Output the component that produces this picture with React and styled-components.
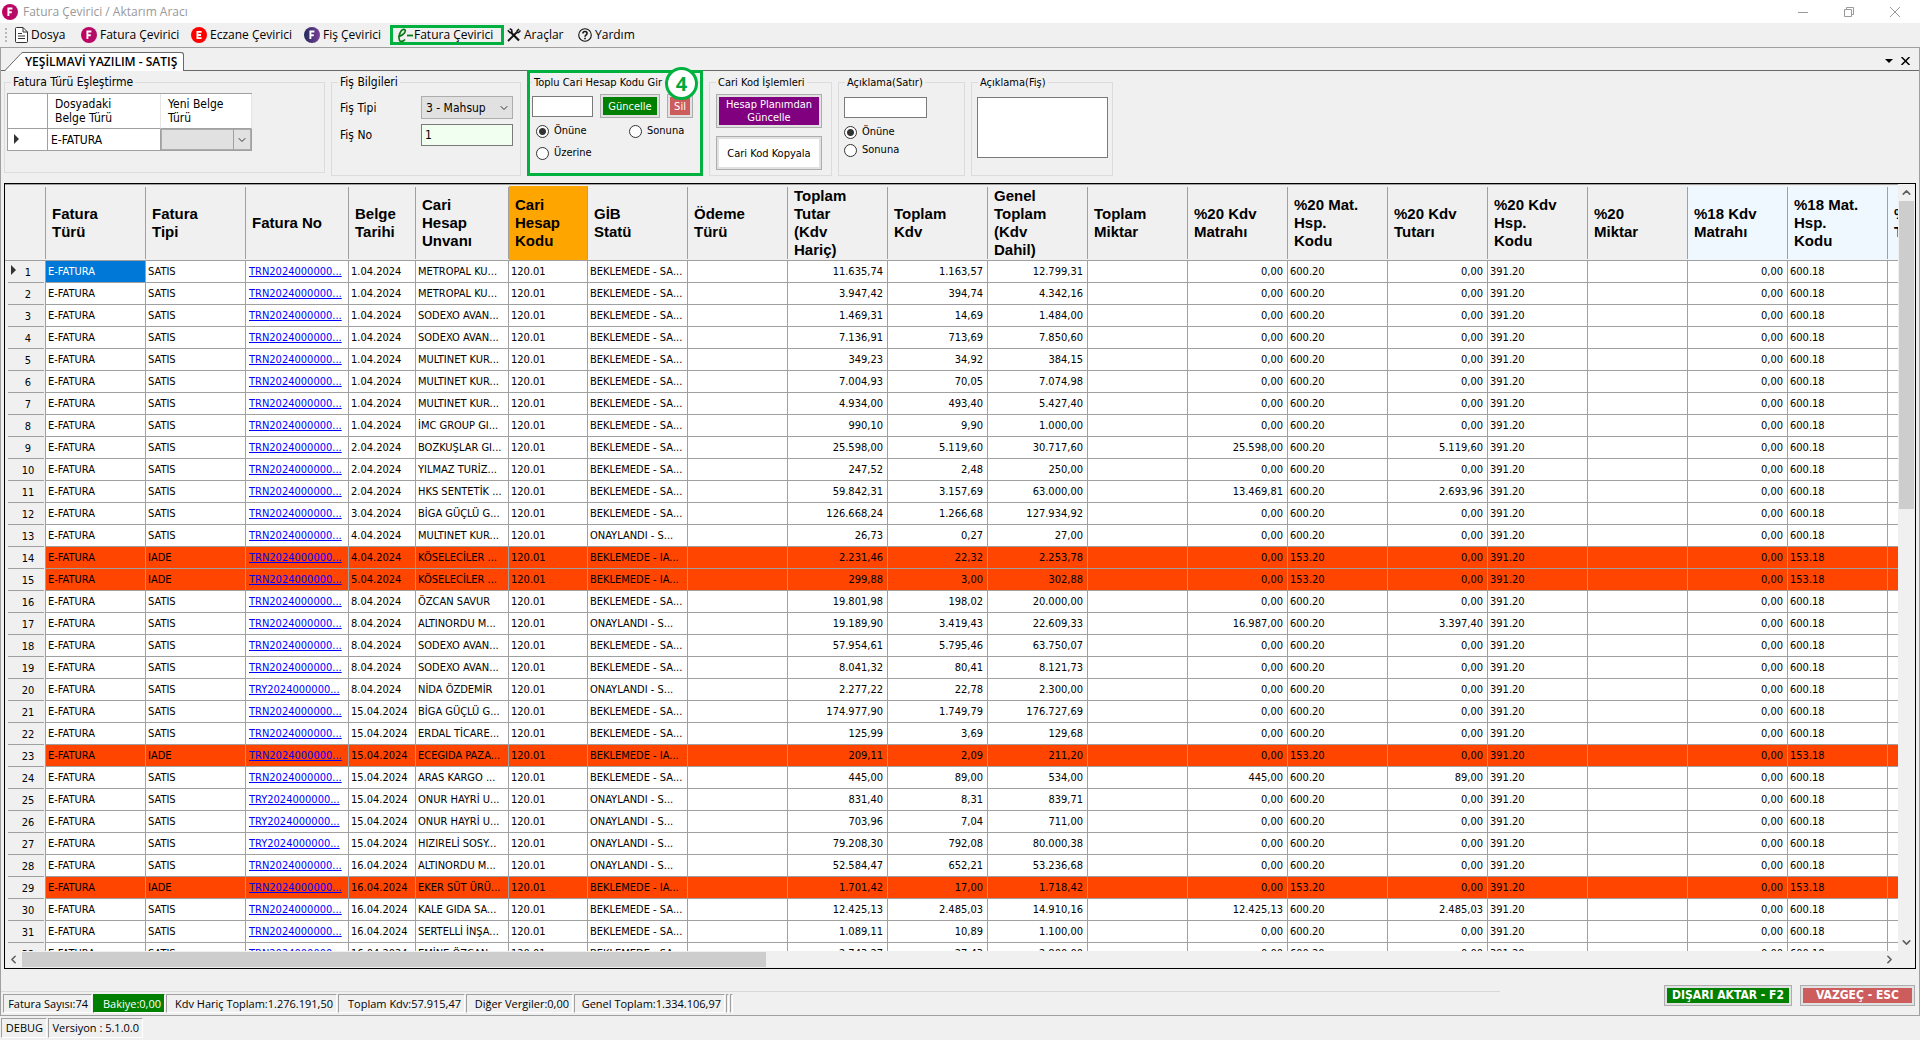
import React, { useState } from "react";
import styled, { createGlobalStyle, css } from "styled-components";
import { ChevronDown, ChevronLeft, ChevronRight, ChevronUp } from "lucide-react";

const columns = [
  { title: "Fatura\nTürü", width: 100 },
  { title: "Fatura\nTipi", width: 100 },
  { title: "Fatura No", width: 103 },
  { title: "Belge\nTarihi", width: 67 },
  { title: "Cari\nHesap\nUnvanı", width: 93 },
  { title: "Cari\nHesap\nKodu", width: 79, color: "#ffa500" },
  { title: "GİB\nStatü", width: 100 },
  { title: "Ödeme\nTürü", width: 100 },
  { title: "Toplam\nTutar\n(Kdv\nHariç)", width: 100 },
  { title: "Toplam\nKdv", width: 100 },
  { title: "Genel\nToplam\n(Kdv\nDahil)", width: 100 },
  { title: "Toplam\nMiktar", width: 100 },
  { title: "%20 Kdv\nMatrahı", width: 100 },
  { title: "%20 Mat.\nHsp.\nKodu", width: 100 },
  { title: "%20 Kdv\nTutarı", width: 100 },
  { title: "%20 Kdv\nHsp.\nKodu", width: 100 },
  { title: "%20\nMiktar", width: 100 },
  { title: "%18 Kdv\nMatrahı", width: 100, color: "#f0f8ff" },
  { title: "%18 Mat.\nHsp.\nKodu", width: 100, color: "#f0f8ff" },
  { title: "%18 Kdv\nTutarı", width: 100, color: "#f0f8ff" },
];

const SA = "BEKLEMEDE - SA...";
const IA = "BEKLEMEDE - IA...";
const ON = "ONAYLANDI - S...";

// prefix, date, customer, status, total, vat, grand total, 20% base, 20% vat
const invoices = [
  ["TRN", "1.04.2024", "METROPAL KU...", SA, "11.635,74", "1.163,57", "12.799,31"],
  ["TRN", "1.04.2024", "METROPAL KU...", SA, "3.947,42", "394,74", "4.342,16"],
  ["TRN", "1.04.2024", "SODEXO AVAN...", SA, "1.469,31", "14,69", "1.484,00"],
  ["TRN", "1.04.2024", "SODEXO AVAN...", SA, "7.136,91", "713,69", "7.850,60"],
  ["TRN", "1.04.2024", "MULTINET KUR...", SA, "349,23", "34,92", "384,15"],
  ["TRN", "1.04.2024", "MULTINET KUR...", SA, "7.004,93", "70,05", "7.074,98"],
  ["TRN", "1.04.2024", "MULTINET KUR...", SA, "4.934,00", "493,40", "5.427,40"],
  ["TRN", "1.04.2024", "İMC GROUP GI...", SA, "990,10", "9,90", "1.000,00"],
  ["TRN", "2.04.2024", "BOZKUŞLAR GI...", SA, "25.598,00", "5.119,60", "30.717,60", "25.598,00", "5.119,60"],
  ["TRN", "2.04.2024", "YILMAZ TURİZ...", SA, "247,52", "2,48", "250,00"],
  ["TRN", "2.04.2024", "HKS SENTETİK ...", SA, "59.842,31", "3.157,69", "63.000,00", "13.469,81", "2.693,96"],
  ["TRN", "3.04.2024", "BİGA GÜÇLÜ G...", SA, "126.668,24", "1.266,68", "127.934,92"],
  ["TRN", "4.04.2024", "MULTINET KUR...", ON, "26,73", "0,27", "27,00"],
  ["TRN", "4.04.2024", "KÖSELECİLER ...", IA, "2.231,46", "22,32", "2.253,78"],
  ["TRN", "5.04.2024", "KÖSELECİLER ...", IA, "299,88", "3,00", "302,88"],
  ["TRN", "8.04.2024", "ÖZCAN SAVUR", SA, "19.801,98", "198,02", "20.000,00"],
  ["TRN", "8.04.2024", "ALTINORDU M...", ON, "19.189,90", "3.419,43", "22.609,33", "16.987,00", "3.397,40"],
  ["TRN", "8.04.2024", "SODEXO AVAN...", SA, "57.954,61", "5.795,46", "63.750,07"],
  ["TRN", "8.04.2024", "SODEXO AVAN...", SA, "8.041,32", "80,41", "8.121,73"],
  ["TRY", "8.04.2024", "NİDA ÖZDEMİR", ON, "2.277,22", "22,78", "2.300,00"],
  ["TRN", "15.04.2024", "BİGA GÜÇLÜ G...", SA, "174.977,90", "1.749,79", "176.727,69"],
  ["TRN", "15.04.2024", "ERDAL TİCARE...", SA, "125,99", "3,69", "129,68"],
  ["TRN", "15.04.2024", "ECEGIDA PAZA...", IA, "209,11", "2,09", "211,20"],
  ["TRN", "15.04.2024", "ARAS KARGO ...", SA, "445,00", "89,00", "534,00", "445,00", "89,00"],
  ["TRY", "15.04.2024", "ONUR HAYRİ U...", ON, "831,40", "8,31", "839,71"],
  ["TRY", "15.04.2024", "ONUR HAYRİ U...", ON, "703,96", "7,04", "711,00"],
  ["TRY", "15.04.2024", "HIZIRELİ SOSY...", ON, "79.208,30", "792,08", "80.000,38"],
  ["TRN", "16.04.2024", "ALTINORDU M...", ON, "52.584,47", "652,21", "53.236,68"],
  ["TRN", "16.04.2024", "EKER SÜT ÜRÜ...", IA, "1.701,42", "17,00", "1.718,42"],
  ["TRN", "16.04.2024", "KALE GIDA SA...", SA, "12.425,13", "2.485,03", "14.910,16", "12.425,13", "2.485,03"],
  ["TRN", "16.04.2024", "SERTELLİ İNŞA...", SA, "1.089,11", "10,89", "1.100,00"],
  ["TRN", "16.04.2024", "EMİNE ÖZCAN ...", SA, "2.743,27", "27,43", "2.800,00"],
];

const totals = [
  { text: "Fatura Sayısı:74", width: 89 },
  { text: "Bakiye:0,00", width: 72, green: true },
  { text: "Kdv Hariç Toplam:1.276.191,50", width: 171 },
  { text: "Toplam Kdv:57.915,47", width: 127 },
  { text: "Diğer Vergiler:0,00", width: 107 },
  { text: "Genel Toplam:1.334.106,97", width: 151 },
];

const RoundLogo = ({ letter, from, to, size = 16 }) => (
  <svg width={size} height={size} viewBox="0 0 16 16" aria-hidden="true">
    <defs>
      <linearGradient id={`g${letter}${size}${from.slice(1)}`} x1="0" x2="1">
        <stop offset="0" stopColor={from} />
        <stop offset="1" stopColor={to} />
      </linearGradient>
    </defs>
    <circle cx="8" cy="8" r="8" fill={`url(#g${letter}${size}${from.slice(1)})`} />
    {letter === "F" ? (
      <path d="M6.4 12V4.5H10.4M6.4 8.2H9.8" stroke="#fff" strokeWidth="1.9" fill="none" />
    ) : (
      <path d="M10.6 4.8H6.4V11.2H10.6M6.4 8H10" stroke="#fff" strokeWidth="1.8" fill="none" />
    )}
  </svg>
);

const FileIcon = () => (
  <svg width="13" height="16" viewBox="0 0 13 16" fill="none" stroke="#333" aria-hidden="true">
    <path d="M.5 1.5Q.5.5 1.5.5H8L12.5 5V14.5Q12.5 15.5 11.5 15.5H1.5Q.5 15.5.5 14.5Z" fill="#fff" />
    <path d="M8 .5V5H12.5M3 6.5H7M3 9H10M3 11.5H10" />
  </svg>
);

const EIcon = () => (
  <svg width="17" height="15" viewBox="0 0 17 15" fill="none" stroke="#0a7a14" aria-hidden="true">
    <path
      d="M1 8.5C4 8 8.5 5.5 8.3 2.8C8.2.8 5.8.8 4.3 2.8C2.3 5.5 1.3 10 2.5 12.3C3.6 14.4 6.3 13.4 8 11.5"
      strokeWidth="1.7"
    />
    <path d="M10 7.5H16" strokeWidth="1.8" />
  </svg>
);

const ToolsIcon = () => (
  <svg width="14" height="14" viewBox="0 0 14 14" fill="none" stroke="#111" aria-hidden="true">
    <path d="M4 4.5L12 12.5" strokeWidth="2.2" />
    <path d="M.8 2.2L3 4.6 5 4 4.7 2 2.7.6" strokeWidth="1.5" />
    <path d="M1 13L9.500 4.500" strokeWidth="1.8" />
    <path d="M12 1L10 3V4.500H11.500L13.500 2.500" strokeWidth="1.5" />
  </svg>
);

const HelpIcon = () => (
  <svg width="14" height="14" viewBox="0 0 14 14" fill="none" stroke="#111" aria-hidden="true">
    <circle cx="7" cy="7" r="6.3" strokeWidth="1.1" />
    <path d="M4.9 5.5C4.9 2.9 9.1 2.9 9.1 5.5C9.1 7 7 6.9 7 8.8" strokeWidth="1.5" />
    <path d="M7 9.8V11.3" strokeWidth="1.6" />
  </svg>
);

const RowArrow = () => (
  <svg width="5" height="10" viewBox="0 0 5 10" aria-hidden="true">
    <path d="M0 0L5 5L0 10Z" fill="#333" />
  </svg>
);

const menu = [
  { text: "Dosya", width: 66, icon: <FileIcon /> },
  { text: "Fatura Çevirici", width: 110, icon: <RoundLogo letter="F" from="#c2005f" to="#b0106a" /> },
  { text: "Eczane Çevirici", width: 113, icon: <RoundLogo letter="E" from="#ff0000" to="#ff0000" /> },
  { text: "Fiş Çevirici", width: 86, icon: <RoundLogo letter="F" from="#232a5c" to="#7b3f98" /> },
  { text: "Fatura Çevirici", width: 114, icon: <EIcon />, marked: true },
  { text: "Araçlar", width: 71, icon: <ToolsIcon /> },
  { text: "Yardım", width: 70, icon: <HelpIcon /> },
];

function InvoiceRow({ invoice, index }) {
  const [prefix, date, customer, status, total, vat, grand, base = "0,00", baseVat = "0,00"] = invoice;
  const refund = status === IA;
  const account = refund ? "153" : "600";

  return (
    <Row $refund={refund}>
      <RowHeader scope="row">
        {index === 0 && (
          <Current>
            <RowArrow />
          </Current>
        )}
        {index + 1}
      </RowHeader>
      <Cell $selected={index === 0}>E-FATURA</Cell>
      <Cell>{refund ? "IADE" : "SATIS"}</Cell>
      <Cell>
        <InvoiceLink href="#fatura">{prefix}2024000000...</InvoiceLink>
      </Cell>
      <Cell>{date}</Cell>
      <Cell>{customer}</Cell>
      <Cell>120.01</Cell>
      <Cell>{status}</Cell>
      <Cell />
      <Cell $right>{total}</Cell>
      <Cell $right>{vat}</Cell>
      <Cell $right>{grand}</Cell>
      <Cell />
      <Cell $right>{base}</Cell>
      <Cell>{account}.20</Cell>
      <Cell $right>{baseVat}</Cell>
      <Cell>391.20</Cell>
      <Cell />
      <Cell $right>0,00</Cell>
      <Cell>{account}.18</Cell>
      <Cell />
    </Row>
  );
}

export default function App() {
  const [place, setPlace] = useState("once");
  const [notePlace, setNotePlace] = useState("once");

  return (
    <>
      <GlobalStyle />
      <Window>
        <TitleBar>
          <RoundLogo letter="F" from="#c2005f" to="#b0106a" />
          <Title>Fatura Çevirici / Aktarım Aracı</Title>
          <WindowButton aria-label="Küçült">
            <svg width="10" height="10" viewBox="0 0 10 10" stroke="#999" fill="none">
              <path d="M0 5.5H10" />
            </svg>
          </WindowButton>
          <WindowButton aria-label="Önceki boyut">
            <svg width="10" height="10" viewBox="0 0 10 10" stroke="#999" fill="none">
              <path d="M.5 2.5H7.5V9.5H.5ZM2.5 2.5V.5H9.5V7.5H7.5" />
            </svg>
          </WindowButton>
          <WindowButton aria-label="Kapat">
            <svg width="10" height="10" viewBox="0 0 10 10" stroke="#999" fill="none">
              <path d="M0 0L10 10M10 0L0 10" />
            </svg>
          </WindowButton>
        </TitleBar>

        <MenuBar>
          <Grip />
          {menu.map((m, i) => (
            <MenuItem key={i} $width={m.width} $marked={m.marked}>
              {m.icon}
              {m.text}
            </MenuItem>
          ))}
        </MenuBar>

        <Document>
          <TabStrip>
            <Slope width="18" height="19" viewBox="0 0 18 19" aria-hidden="true">
              <path d="M0 19L16 1.5Q17 .5 18 .5V19Z" fill="#fff" />
              <path d="M0 18.5L16 1.5Q17 .5 18 .5" fill="none" stroke="#696969" />
            </Slope>
            <Tab>YEŞİLMAVİ YAZILIM - SATIŞ</Tab>
            <TabTools>
              <TabButton aria-label="Sekmeler">
                <svg width="8" height="4" viewBox="0 0 8 4">
                  <path d="M0 0H8L4 4Z" />
                </svg>
              </TabButton>
              <TabButton aria-label="Sekmeyi kapat">
                <svg width="9" height="8" viewBox="0 0 9 8" stroke="#000" strokeWidth="1.5">
                  <path d="M.5 0L8.5 8M8.5 0L.5 8" />
                </svg>
              </TabButton>
            </TabTools>
          </TabStrip>

          <Options>
            <Group $width={321} $height={98} $large>
              <legend>Fatura Türü Eşleştirme</legend>
              <MatchTable>
                <colgroup>
                  <col width="40" />
                  <col width="113" />
                  <col width="91" />
                </colgroup>
                <thead>
                  <tr>
                    <th />
                    <th>{"Dosyadaki\nBelge Türü"}</th>
                    <th>{"Yeni Belge\nTürü"}</th>
                  </tr>
                </thead>
                <tbody>
                  <tr>
                    <MatchArrow>
                      <RowArrow />
                    </MatchArrow>
                    <td>E-FATURA</td>
                    <MatchSelect>
                      <SelectBox $height={21}>
                        <select aria-label="Yeni Belge Türü">
                          <option></option>
                        </select>
                        <Divider />
                        <ChevronDown size={12} strokeWidth={2} />
                      </SelectBox>
                    </MatchSelect>
                  </tr>
                </tbody>
              </MatchTable>
            </Group>

            <Group $width={190} $height={101} $large>
              <legend>Fiş Bilgileri</legend>
              <Fields>
                <label htmlFor="fisTipi">Fiş Tipi</label>
                <SelectBox $height={23}>
                  <select id="fisTipi">
                    <option>3 - Mahsup</option>
                  </select>
                  <ChevronDown size={12} strokeWidth={2} />
                </SelectBox>
                <label htmlFor="fisNo">Fiş No</label>
                <TextInput id="fisNo" defaultValue="1" $mint $height={22} />
              </Fields>
            </Group>

            <Step>
              <StepBadge>4</StepBadge>
              <Group $height={96} $open>
                <legend>Toplu Cari Hesap Kodu Gir</legend>
                <CodeRow>
                  <TextInput aria-label="Cari hesap kodu" $width={61} $height={21} />
                  <Button $color="#008000" $width={60} $height={24}>
                    Güncelle
                  </Button>
                  <Button $color="#cd5c5c" $width={26} $height={24}>
                    Sil
                  </Button>
                </CodeRow>
                <Choices>
                  <Radio>
                    <input type="radio" name="place" checked={place === "once"} onChange={() => setPlace("once")} />
                    Önüne
                  </Radio>
                  <Radio>
                    <input type="radio" name="place" checked={place === "sona"} onChange={() => setPlace("sona")} />
                    Sonuna
                  </Radio>
                  <Radio>
                    <input type="radio" name="place" checked={place === "uzerine"} onChange={() => setPlace("uzerine")} />
                    Üzerine
                  </Radio>
                </Choices>
              </Group>
            </Step>

            <Group $width={123} $height={101}>
              <legend>Cari Kod İşlemleri</legend>
              <CodeActions>
                <Button $color="#800080" $height={34}>
                  Hesap Planımdan Güncelle
                </Button>
                <Button $height={34}>Cari Kod Kopyala</Button>
              </CodeActions>
            </Group>

            <Group $width={127} $height={101}>
              <legend>Açıklama(Satır)</legend>
              <Notes>
                <TextInput aria-label="Açıklama(Satır)" $width={83} $height={21} />
                <RadioColumn>
                  <Radio>
                    <input type="radio" name="note" checked={notePlace === "once"} onChange={() => setNotePlace("once")} />
                    Önüne
                  </Radio>
                  <Radio>
                    <input type="radio" name="note" checked={notePlace === "sona"} onChange={() => setNotePlace("sona")} />
                    Sonuna
                  </Radio>
                </RadioColumn>
              </Notes>
            </Group>

            <Group $width={142} $height={101}>
              <legend>Açıklama(Fiş)</legend>
              <Notes>
                <TextArea aria-label="Açıklama(Fiş)" />
              </Notes>
            </Group>
          </Options>

          <DataGrid>
            <Viewport>
              <Table>
                <colgroup>
                  <col style={{ width: 41 }} />
                  {columns.map((c, i) => (
                    <col key={i} style={{ width: c.width }} />
                  ))}
                </colgroup>
                <thead>
                  <tr>
                    <ColumnHeader />
                    {columns.map((c, i) => (
                      <ColumnHeader key={i} scope="col" $color={c.color}>
                        {c.title}
                      </ColumnHeader>
                    ))}
                  </tr>
                </thead>
                <tbody>
                  {invoices.map((invoice, i) => (
                    <InvoiceRow key={i} invoice={invoice} index={i} />
                  ))}
                </tbody>
              </Table>
            </Viewport>
            <ScrollColumn>
              <ChevronUp size={13} strokeWidth={3} />
              <ScrollTrack>
                <ThumbY />
              </ScrollTrack>
              <ChevronDown size={13} strokeWidth={3} />
            </ScrollColumn>
            <ScrollRow>
              <ChevronLeft size={13} strokeWidth={3} />
              <ScrollTrack>
                <ThumbX />
              </ScrollTrack>
              <ChevronRight size={13} strokeWidth={3} />
            </ScrollRow>
          </DataGrid>

          <Footer>
            <Totals>
              {totals.map((t) => (
                <Pane key={t.text} $width={t.width} $green={t.green}>
                  {t.text}
                </Pane>
              ))}
              <Pane $width={3} />
              <Pane $width={3} />
            </Totals>
            <Actions>
              <Button $color="#008000" $width={128} $height={21} $bold>
                DIŞARI AKTAR - F2
              </Button>
              <Button $color="#cd5c5c" $width={115} $height={21} $bold>
                VAZGEÇ - ESC
              </Button>
            </Actions>
          </Footer>
        </Document>

        <StatusBar>
          <Pane $width={46}>DEBUG</Pane>
          <Pane $width={95}>Versiyon : 5.1.0.0</Pane>
        </StatusBar>
      </Window>
    </>
  );
}

const uiFont = `"Open Sans", "Noto Sans", sans-serif`;
const formFont = `"DejaVu Sans Condensed", "DejaVu Sans", sans-serif`;

const GlobalStyle = createGlobalStyle`
  * {
    box-sizing: border-box;
  }
  body {
    margin: 0;
    background: #f0f0f0;
    color: #000;
    font-family: ${formFont};
    font-size: 11px;
  }
  button, input, select, textarea {
    font: inherit;
    color: inherit;
    margin: 0;
  }
`;

const Window = styled.div`
  display: flex;
  flex-direction: column;
  height: 100vh;
  overflow: hidden;
`;

const TitleBar = styled.header`
  display: flex;
  align-items: center;
  height: 23px;
  padding: 0 2px;
  background: #fff;
`;

const Title = styled.div`
  flex: 1;
  padding-left: 5px;
  color: #999;
  font-family: ${uiFont};
  font-size: 12px;
`;

const WindowButton = styled.button`
  display: flex;
  align-items: center;
  justify-content: center;
  width: 46px;
  height: 20px;
  padding: 0;
  border: 0;
  background: none;
`;

const MenuBar = styled.nav`
  display: flex;
  align-items: center;
  height: 24px;
`;

const Grip = styled.div`
  width: 2px;
  height: 14px;
  margin: 0 8px 0 5px;
  background: repeating-linear-gradient(#b8b8b8 0 2px, transparent 2px 4px);
`;

const MenuItem = styled.button`
  display: flex;
  align-items: center;
  gap: 3px;
  width: ${(p) => p.$width}px;
  height: 20px;
  padding: 0;
  border: 0;
  background: none;
  font-family: ${uiFont};
  font-size: 12px;
  line-height: 14px;
  white-space: nowrap;
  ${(p) =>
    p.$marked &&
    css`
      gap: 0;
      margin-right: 3px;
      padding-left: 4px;
      border: 3px solid #00b140;
    `}
`;

const Document = styled.main`
  display: flex;
  flex: 1;
  flex-direction: column;
  min-height: 0;
  border: 1px solid #a0a0a0;
`;

const TabStrip = styled.div`
  display: flex;
  align-items: flex-end;
  height: 23px;
  padding-left: 4px;
  border-bottom: 1px solid #696969;
`;

const Slope = styled.svg`
  margin-bottom: -1px;
`;

const Tab = styled.button`
  height: 19px;
  margin-bottom: -1px;
  padding: 0 6px 2px 2px;
  border: 1px solid #696969;
  border-width: 1px 1px 0 0;
  border-top-right-radius: 3px;
  background: #fff;
  font-family: ${uiFont};
  font-size: 12px;
  font-weight: 600;
  line-height: 15px;
`;

const TabTools = styled.div`
  display: flex;
  align-items: center;
  gap: 8px;
  margin-left: auto;
  padding: 0 9px 5px 0;
`;

const TabButton = styled.button`
  display: flex;
  padding: 0;
  border: 0;
  background: none;
`;

const Options = styled.div`
  display: flex;
  align-items: flex-start;
  gap: 6px;
  padding: 4px 3px 7px;
`;

const Group = styled.fieldset`
  flex: none;
  min-width: 0;
  width: ${(p) => (p.$width ? `${p.$width}px` : "auto")};
  height: ${(p) => p.$height}px;
  margin: 0;
  padding: 0;
  border: 1px solid #dcdcdc;
  font-size: ${(p) => (p.$large ? 12 : 11)}px;

  legend {
    margin-left: ${(p) => (p.$open ? 2 : 6)}px;
    padding: 0 2px;
    line-height: 15px;
  }
  ${(p) =>
    p.$open &&
    css`
      border-width: 1px 0 0;
    `}
`;

const MatchTable = styled.table`
  width: 245px;
  margin: 3px 0 0 2px;
  table-layout: fixed;
  border-spacing: 0;
  border-top: 1px solid #a0a0a0;
  border-left: 1px solid #a0a0a0;
  background: #fff;

  th {
    height: 35px;
    padding: 0 0 0 7px;
    border-right: 1px solid #e4e4e4;
    border-bottom: 1px solid #a0a0a0;
    font-weight: normal;
    line-height: 14px;
    text-align: left;
    white-space: pre-line;
  }
  th:first-child {
    border-right-color: #a0a0a0;
  }
  td {
    height: 22px;
    padding: 0 0 0 3px;
    border: 1px solid #a0a0a0;
    border-width: 0 1px 1px 0;
  }
`;

const MatchArrow = styled.td`
  && {
    padding-left: 6px;
  }
`;

const MatchSelect = styled.td`
  && {
    padding: 0;
  }
`;

const SelectBox = styled.div`
  position: relative;
  height: ${(p) => p.$height}px;

  select {
    width: 100%;
    height: 100%;
    padding: 0 4px;
    border: 1px solid #adadad;
    border-radius: 0;
    appearance: none;
    background: #e1e1e1;
  }
  svg {
    position: absolute;
    top: 50%;
    right: 3px;
    margin-top: -6px;
    color: #333;
    pointer-events: none;
  }
`;

const Divider = styled.span`
  position: absolute;
  top: 0;
  right: 17px;
  width: 1px;
  height: 100%;
  background: #a0a0a0;
`;

const Fields = styled.div`
  display: grid;
  grid-template-columns: 81px 92px;
  align-items: center;
  row-gap: 5px;
  padding: 6px 0 0 8px;
`;

const TextInput = styled.input`
  display: block;
  width: ${(p) => (p.$width ? `${p.$width}px` : "100%")};
  height: ${(p) => p.$height}px;
  padding: 0 3px;
  border: 1px solid #7a7a7a;
  background: ${(p) => (p.$mint ? "#f0fff0" : "#fff")};
`;

const TextArea = styled.textarea`
  display: block;
  width: 131px;
  height: 61px;
  border: 1px solid #7a7a7a;
  resize: none;
`;

const Step = styled.div`
  position: relative;
  flex: none;
  width: 176px;
  height: 106px;
  margin-top: -5px;
  padding-top: 2px;
  border: 3px solid #00b140;
`;

const StepBadge = styled.div`
  position: absolute;
  top: -6px;
  right: 2px;
  width: 33px;
  height: 33px;
  border: 3px solid #00b140;
  border-radius: 50%;
  background: #fff;
  color: #00a83c;
  font-family: ${uiFont};
  font-size: 20px;
  font-weight: 700;
  line-height: 27px;
  text-align: center;
`;

const CodeRow = styled.div`
  display: flex;
  align-items: center;
  gap: 7px;
  padding: 4px 0 0 2px;
`;

const Choices = styled.div`
  display: grid;
  grid-template-columns: 93px auto;
  row-gap: 8px;
  padding: 6px 0 0 6px;
`;

const Radio = styled.label`
  display: flex;
  align-items: center;
  gap: 5px;
  line-height: 14px;

  input {
    width: 13px;
    height: 13px;
    border: 1px solid #333;
    border-radius: 50%;
    appearance: none;
    background: #fff;
  }
  input:checked {
    background: radial-gradient(#333 0 3px, #fff 4px);
  }
`;

const RadioColumn = styled.div`
  display: grid;
  gap: 4px;
  padding-top: 7px;
`;

const CodeActions = styled.div`
  display: grid;
  gap: 8px;
  padding: 4px 9px 0 6px;
`;

const Notes = styled.div`
  padding: 7px 0 0 5px;
`;

const Button = styled.button`
  width: ${(p) => (p.$width ? `${p.$width}px` : "auto")};
  height: ${(p) => p.$height}px;
  padding: 0 2px;
  border: 1px solid #adadad;
  background: ${(p) => p.$color || "#fff"};
  box-shadow: inset 0 0 0 2px #e1e1e1;
  color: ${(p) => (p.$color ? "#fff" : "#000")};
  line-height: 13px;
  ${(p) =>
    p.$bold &&
    css`
      font-size: 12px;
      font-weight: 700;
      white-space: nowrap;
    `}
`;

const DataGrid = styled.section`
  display: grid;
  flex: 1;
  grid-template-columns: minmax(0, 1fr) 17px;
  grid-template-rows: minmax(0, 1fr) 17px;
  min-height: 0;
  margin: 0 3px;
  border: 1px solid #000;
`;

const Viewport = styled.div`
  overflow: hidden;
  border-top: 1px solid #a0a0a0;
  background: #fff;
`;

const Table = styled.table`
  width: 1955px;
  table-layout: fixed;
  border-spacing: 0;
`;

const ColumnHeader = styled.th`
  height: 76px;
  padding: 0 0 0 6px;
  border-bottom: 1px solid #a0a0a0;
  background: linear-gradient(#a0a0a0, #a0a0a0) right 2px / 1px 72px no-repeat ${(p) => p.$color || "#f0f0f0"};
  box-shadow: inset 0 1px #f0f0f0;
  font-family: "Liberation Sans", Arial, sans-serif;
  font-size: 15px;
  font-weight: 700;
  line-height: 18px;
  text-align: left;
  white-space: pre;
`;

const Cell = styled.td`
  height: 22px;
  padding: 0 4px 0 2px;
  border: 1px solid #a0a0a0;
  border-width: 0 1px 1px 0;
  overflow: hidden;
  text-align: ${(p) => (p.$right ? "right" : "left")};
  white-space: nowrap;
  ${(p) =>
    p.$selected &&
    css`
      background: #0078d7;
      color: #fff;
    `}
`;

const Row = styled.tr`
  background: ${(p) => (p.$refund ? "#ff4500" : "#fff")};
`;

const RowHeader = styled.th`
  position: relative;
  padding: 0 0 0 6px;
  border-right: 1px solid #a0a0a0;
  background: linear-gradient(#a0a0a0, #a0a0a0) 3px bottom / 36px 1px no-repeat #f0f0f0;
  font-weight: normal;
`;

const Current = styled.span`
  position: absolute;
  top: 4px;
  left: 6px;
`;

const InvoiceLink = styled.a`
  padding-left: 1px;
  color: #0000ff;
`;

const ScrollColumn = styled.div`
  display: flex;
  flex-direction: column;
  align-items: center;
  padding: 2px 0;
  color: #606060;
`;

const ScrollRow = styled.div`
  display: flex;
  grid-column: 1;
  align-items: center;
  padding: 0 2px;
  color: #606060;
`;

const ScrollTrack = styled.div`
  flex: 1;
  align-self: stretch;
  padding: 2px;
`;

const ThumbY = styled.div`
  width: 15px;
  height: 42%;
  margin-left: -1px;
  background: #cdcdcd;
`;

const ThumbX = styled.div`
  width: 40%;
  height: 15px;
  margin-top: -1px;
  background: #cdcdcd;
`;

const Footer = styled.footer`
  display: flex;
  align-items: flex-end;
  justify-content: space-between;
  height: 46px;
`;

const Totals = styled.div`
  display: flex;
  flex: 0 1 1499px;
  gap: 1px;
  height: 24px;
  padding: 2px 0 2px 2px;
  border-top: 1px solid #d8d8d8;
`;

const Pane = styled.div`
  min-width: ${(p) => p.$width}px;
  padding-right: ${(p) => (p.$width > 3 ? 3 : 0)}px;
  border: 1px solid #a0a0a0;
  border-color: #a0a0a0 #fff #fff #a0a0a0;
  font-family: ${uiFont};
  font-size: 11px;
  line-height: 17px;
  text-align: right;
  white-space: nowrap;
  ${(p) =>
    p.$green &&
    css`
      background: #008000;
      color: #fff;
      border-color: #008000 #fff #fff #008000;
    `}
`;

const Actions = styled.div`
  display: flex;
  gap: 8px;
  padding: 0 4px 9px 0;
`;

const StatusBar = styled.div`
  display: flex;
  gap: 1px;
  height: 24px;
  padding: 2px 1px;
`;
